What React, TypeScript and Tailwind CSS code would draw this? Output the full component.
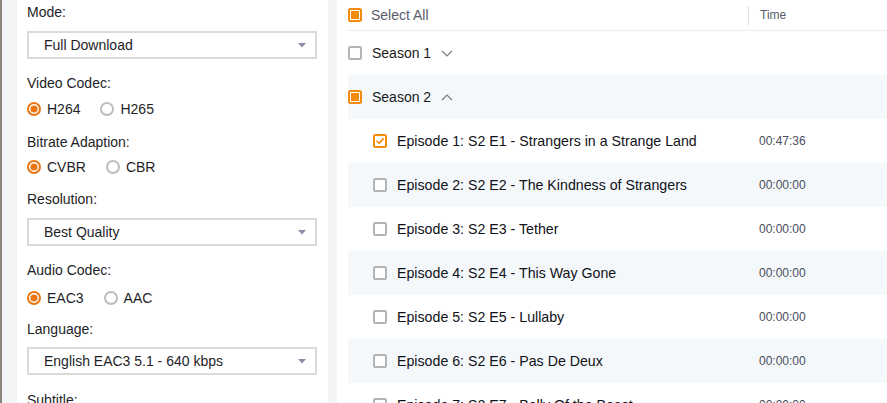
import React from "react";

const ORANGE = "#f28a0c";
const RADIO = "#ec7613";

function Box({ state }: { state: "on" | "off" | "full" }) {
  if (state === "off")
    return (
      <svg width="14" height="14" viewBox="0 0 14 14" className="shrink-0">
        <rect x="1" y="1" width="12" height="12" rx="1.5" fill="#fff" stroke="#b4b4b4" strokeWidth="2" />
      </svg>
    );
  if (state === "full")
    return (
      <svg width="14" height="14" viewBox="0 0 14 14" className="shrink-0">
        <rect x="1" y="1" width="12" height="12" rx="1.5" fill="#fff" stroke={ORANGE} strokeWidth="2" />
        <rect x="3" y="3" width="8" height="8" fill={ORANGE} />
      </svg>
    );
  return (
    <svg width="14" height="14" viewBox="0 0 14 14" className="shrink-0">
      <rect x="1" y="1" width="12" height="12" rx="1.5" fill="#fff" stroke={ORANGE} strokeWidth="2" />
      <path d="M3.6 6.8 L6.1 9.3 L10.6 4.4" fill="none" stroke={ORANGE} strokeWidth="1.6" />
    </svg>
  );
}

function Radio({ on, label, last }: { on: boolean; label: string; last?: boolean }) {
  return (
    <div className={`flex items-center ${last ? "" : "mr-[20px]"}`}>
      <svg width="14" height="14" viewBox="0 0 14 14" className="shrink-0">
        {on ? (
          <>
            <circle cx="7" cy="7" r="6" fill="#fff" stroke={RADIO} strokeWidth="2" />
            <circle cx="7" cy="7" r="3.6" fill={RADIO} />
          </>
        ) : (
          <circle cx="7" cy="7" r="6" fill="#fff" stroke="#bdbdbd" strokeWidth="2" />
        )}
      </svg>
      <span className="ml-[6px] text-[14px] leading-[16px] text-[#1e1e28]">{label}</span>
    </div>
  );
}

function Select({ value, mt }: { value: string; mt: string }) {
  return (
    <div
      className={`${mt} h-[28px] w-[290px] shrink-0 border-2 border-[#dadada] bg-white flex items-center pl-[15px] pr-[9px] justify-between`}
    >
      <span className="text-[14px] leading-[16px] text-[#1e1e28]">{value}</span>
      <svg width="8" height="5" viewBox="0 0 8 5">
        <path d="M0 0 L8 0 L4 4.5 Z" fill="#8d8aa6" />
      </svg>
    </div>
  );
}

function Label({ text, mt }: { text: string; mt: string }) {
  return <div className={`${mt} shrink-0 text-[14px] leading-[16px] text-[#1e1e28]`}>{text}</div>;
}

function Chevron({ up }: { up?: boolean }) {
  return (
    <svg width="12" height="7" viewBox="0 0 12 7" className="ml-[10px]">
      <polyline
        points={up ? "1,6 6,1 11,6" : "1,1 6,6 11,1"}
        fill="none"
        stroke="#7a7a82"
        strokeWidth="1.2"
      />
    </svg>
  );
}

const episodes = [
  ["Episode 1: S2 E1 - Strangers in a Strange Land", "00:47:36"],
  ["Episode 2: S2 E2 - The Kindness of Strangers", "00:00:00"],
  ["Episode 3: S2 E3 - Tether", "00:00:00"],
  ["Episode 4: S2 E4 - This Way Gone", "00:00:00"],
  ["Episode 5: S2 E5 - Lullaby", "00:00:00"],
  ["Episode 6: S2 E6 - Pas De Deux", "00:00:00"],
  ["Episode 7: S2 E7 - Belly Of the Beast", "00:00:00"],
];

export default function App() {
  return (
    <div
      className="w-[887px] h-[403px] overflow-hidden flex bg-[#f3f4f6]"
      style={{ fontFamily: '"Liberation Sans", Arial, sans-serif' }}
    >
      <div className="w-[2px] shrink-0 bg-[#8c837a]" />
      <div className="w-[15px] shrink-0 bg-[#f2f3f5]" />
      {/* Left panel */}
      <div className="w-[311px] shrink-0 bg-white pl-[10px] pt-[4px] flex flex-col">
        <Label text="Mode:" mt="mt-0" />
        <Select value="Full Download" mt="mt-[11px]" />
        <Label text="Video Codec:" mt="mt-[16px]" />
        <div className="mt-[10px] shrink-0 flex items-center h-[16px]">
          <Radio on label="H264" />
          <Radio on={false} label="H265" last />
        </div>
        <Label text="Bitrate Adaption:" mt="mt-[17px]" />
        <div className="mt-[9px] shrink-0 flex items-center h-[16px]">
          <Radio on label="CVBR" />
          <Radio on={false} label="CBR" last />
        </div>
        <Label text="Resolution:" mt="mt-[16px]" />
        <Select value="Best Quality" mt="mt-[11px]" />
        <Label text="Audio Codec:" mt="mt-[16px]" />
        <div className="mt-[12px] shrink-0 flex items-center h-[16px]">
          <Radio on label="EAC3" />
          <Radio on={false} label="AAC" last />
        </div>
        <Label text="Language:" mt="mt-[15px]" />
        <Select value="English EAC3 5.1 - 640 kbps" mt="mt-[10px]" />
        <Label text="Subtitle:" mt="mt-[17px]" />
      </div>
      <div className="w-[9px] shrink-0 bg-[#f3f4f6]" />
      {/* Right panel */}
      <div className="flex-1 bg-white pl-[11px] flex flex-col">
        <div className="h-[31px] shrink-0 flex items-center border-b border-[#ebedf0]">
          <div className="w-[400px] flex items-center">
            <Box state="full" />
            <span className="ml-[9px] text-[14px] leading-[16px] text-[#585c6c]">Select All</span>
          </div>
          <div className="h-[19px] w-[1px] bg-[#dde0e6]" />
          <span className="ml-[11px] text-[12px] leading-[14px] text-[#585c6c]">Time</span>
        </div>
        <div className="h-[44px] shrink-0 flex items-center">
          <Box state="off" />
          <span className="ml-[10px] text-[14px] leading-[16px] text-[#1a1a22]">Season 1</span>
          <Chevron />
        </div>
        <div className="h-[44px] shrink-0 flex items-center bg-[#f4f8fb]">
          <Box state="full" />
          <span className="ml-[10px] text-[14px] leading-[16px] text-[#1a1a22]">Season 2</span>
          <Chevron up />
        </div>
        {episodes.map(([title, time], i) => (
          <div
            key={title}
            className={`h-[44px] shrink-0 flex items-center pl-[25px] ${i % 2 === 1 ? "bg-[#f4f8fb]" : "bg-white"}`}
          >
            <div className="w-[386px] flex items-center">
              <Box state={i === 0 ? "on" : "off"} />
              <span className="ml-[10px] text-[14.2px] leading-[16px] text-[#111118] whitespace-nowrap">{title}</span>
            </div>
            <span className="text-[12px] leading-[14px] text-[#4a4d5c]">{time}</span>
          </div>
        ))}
      </div>
    </div>
  );
}
